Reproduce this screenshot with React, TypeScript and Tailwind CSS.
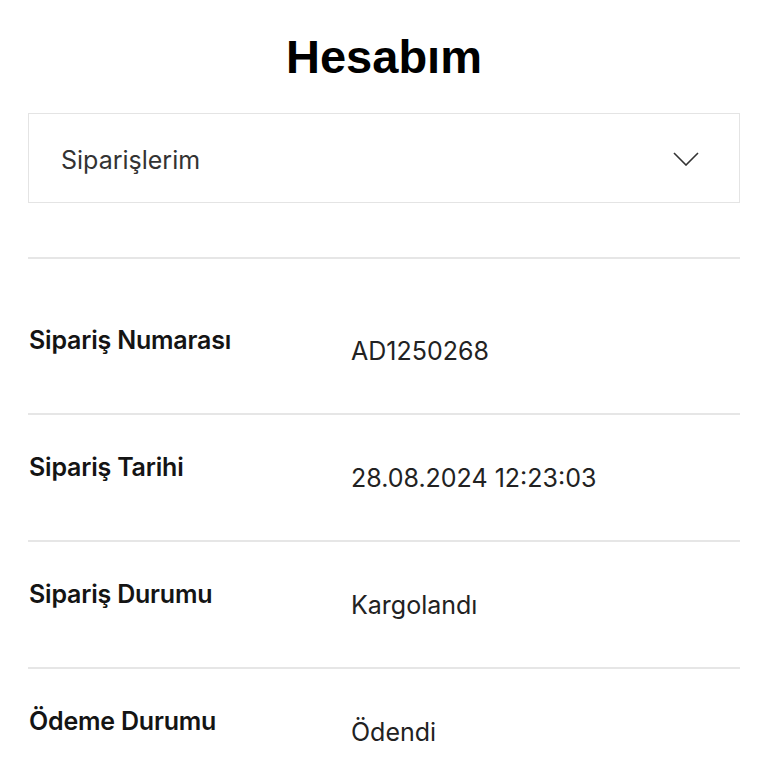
import React from "react";

const rows = [
  { label: "Sipariş Numarası", value: "AD1250268" },
  { label: "Sipariş Tarihi", value: "28.08.2024 12:23:03" },
  { label: "Sipariş Durumu", value: "Kargolandı" },
  { label: "Ödeme Durumu", value: "Ödendi" },
];

export default function App() {
  return (
    <div className="min-h-[768px] w-full bg-white px-[28px] pt-[29px] font-['Inter',_'Liberation_Sans',_sans-serif]">
      <h1 className="text-center font-['Liberation_Sans',_Arial,_sans-serif] text-[47px] leading-[56px] font-bold text-black">
        Hesabım
      </h1>
      <div className="mt-[28px] flex h-[90px] items-center justify-between border border-[#e4e4e4] pl-[32px] pr-[40px]">
        <span className="pt-[3px] text-[25px] leading-[32px] text-[#333333]">Siparişlerim</span>
        <svg width="26" height="14" viewBox="0 0 26 14" fill="none" className="mt-[2px]">
          <polyline points="1,1 13,13 25,1" stroke="#333333" strokeWidth="1.6" />
        </svg>
      </div>
      <div className="mt-[54px] border-t-2 border-[#e6e6e6] pt-[29px]">
        {rows.map((r, i) => (
          <div
            key={r.label}
            className={`flex items-start pt-[36px] pb-[46px] ${i > 0 ? "border-t-2 border-[#e6e6e6]" : ""}`}
          >
            <div className="w-[323px] shrink-0 pl-[1px] text-[25px] leading-[32px] font-semibold tracking-[-0.2px] text-[#141414]">
              {r.label}
            </div>
            <div className="pt-[11px] text-[25px] leading-[32px] text-[#222222]">{r.value}</div>
          </div>
        ))}
      </div>
    </div>
  );
}
